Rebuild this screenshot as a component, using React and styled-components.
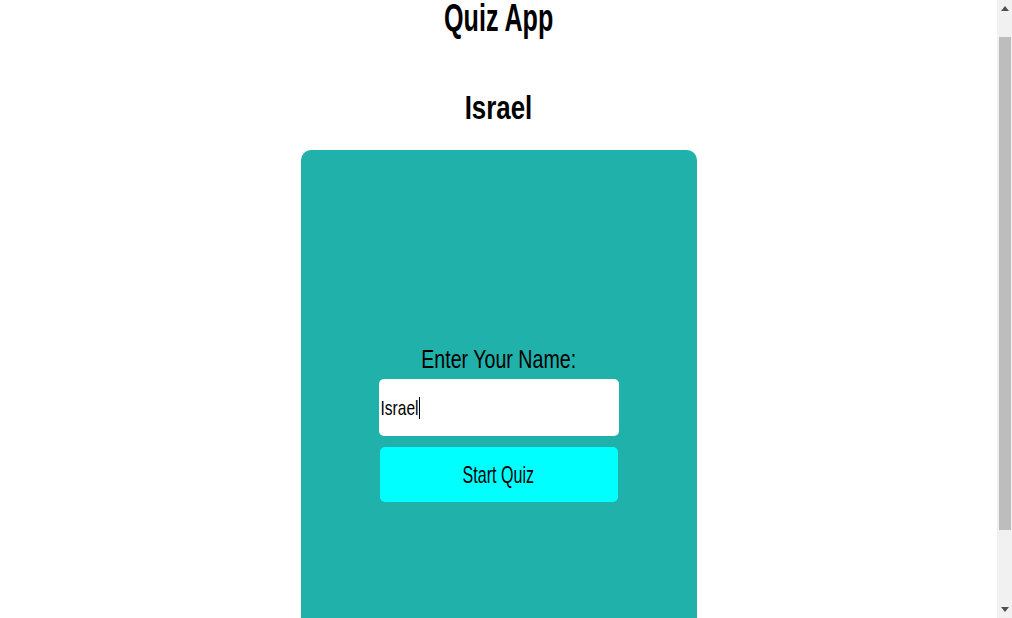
import { useEffect, useState } from "react";
import styled, { createGlobalStyle } from "styled-components";

const GlobalStyle = createGlobalStyle`
  html, body {
    margin: 0;
    padding: 0;
    background: #ffffff;
    font-family: "Liberation Sans", Arial, sans-serif;
    color: #000000;
  }
`;

const App = () => {
  const [name, setName] = useState("Israel");

  useEffect(() => {
    window.scrollTo(0, 25);
  }, []);

  return (
    <StyledPage>
      <GlobalStyle />
      <StyledTitle>
        <Squeeze $sx={0.66}>Quiz App</Squeeze>
      </StyledTitle>

      <StyledPlayer>
        <Squeeze $sx={0.76}>{name}</Squeeze>
      </StyledPlayer>

      <StyledCard>
        <StyledLabel htmlFor="player-name">
          <Squeeze $sx={0.785}>Enter Your Name:</Squeeze>
        </StyledLabel>

        <StyledField>
          <StyledInput
            id="player-name"
            value={name}
            onChange={(e) => setName(e.target.value)}
          />
          <StyledCaret />
        </StyledField>

        <StyledButton>
          <Squeeze $sx={0.67}>Start Quiz</Squeeze>
        </StyledButton>
      </StyledCard>

      <StyledScrollbar>
        <StyledArrow>
          <svg width="8" height="5" viewBox="0 0 8 5">
            <path d="M0 5 L4 0 L8 5 Z" fill="#505050" />
          </svg>
        </StyledArrow>
        <StyledTrack>
          <StyledThumb />
        </StyledTrack>
        <StyledArrow>
          <svg width="8" height="5" viewBox="0 0 8 5">
            <path d="M0 0 L4 5 L8 0 Z" fill="#505050" />
          </svg>
        </StyledArrow>
      </StyledScrollbar>
    </StyledPage>
  );
};

const Squeeze = styled.span`
  display: inline-block;
  white-space: nowrap;
  transform: scaleX(${(p) => p.$sx});
  transform-origin: center;
`;

const StyledPage = styled.div`
  display: flex;
  flex-direction: column;
  align-items: center;
  padding: 21px 15px 10px 0;
`;

const StyledTitle = styled.h1`
  margin: 0;
  font-size: 38px;
  line-height: 44px;
  font-weight: 700;
`;

const StyledPlayer = styled.h2`
  margin: 47px 0 23px;
  font-size: 34px;
  line-height: 40px;
  font-weight: 700;
`;

const StyledCard = styled.div`
  width: 396px;
  height: 546px;
  border-radius: 10px;
  background: #20b2aa;
  display: flex;
  flex-direction: column;
  align-items: center;
  justify-content: center;
`;

const StyledLabel = styled.label`
  font-size: 25px;
  line-height: 30px;
  margin-bottom: 5px;
`;

const StyledField = styled.div`
  position: relative;
  width: 240px;
  height: 57px;
  border-radius: 5px;
  background: #ffffff;
  overflow: hidden;
  margin-bottom: 11px;
`;

const StyledInput = styled.input`
  width: 330px;
  height: 57px;
  box-sizing: border-box;
  border: none;
  outline: none;
  background: transparent;
  padding: 0 0 0 2px;
  font-family: "Liberation Sans", Arial, sans-serif;
  font-size: 21px;
  color: #000000;
  transform: scaleX(0.74);
  transform-origin: left center;
`;

const StyledCaret = styled.span`
  position: absolute;
  left: 40px;
  top: 18px;
  width: 1px;
  height: 22px;
  background: #000000;
`;

const StyledButton = styled.button`
  width: 238px;
  height: 55px;
  border: none;
  border-radius: 5px;
  background: #00ffff;
  font-family: "Liberation Sans", Arial, sans-serif;
  font-size: 24px;
  color: #000000;
  padding: 0;
  cursor: pointer;
`;

const StyledScrollbar = styled.div`
  position: fixed;
  top: 0;
  right: 0;
  width: 15px;
  height: 100vh;
  background: #f1f1f1;
  display: flex;
  flex-direction: column;
`;

const StyledArrow = styled.div`
  height: 17px;
  display: flex;
  align-items: center;
  justify-content: center;
  flex-shrink: 0;
`;

const StyledTrack = styled.div`
  flex: 1;
  padding: 0 1px 0 2px;
`;

const StyledThumb = styled.div`
  margin-top: 20px;
  height: 493px;
  background: #bdbdbd;
`;

export default App;
